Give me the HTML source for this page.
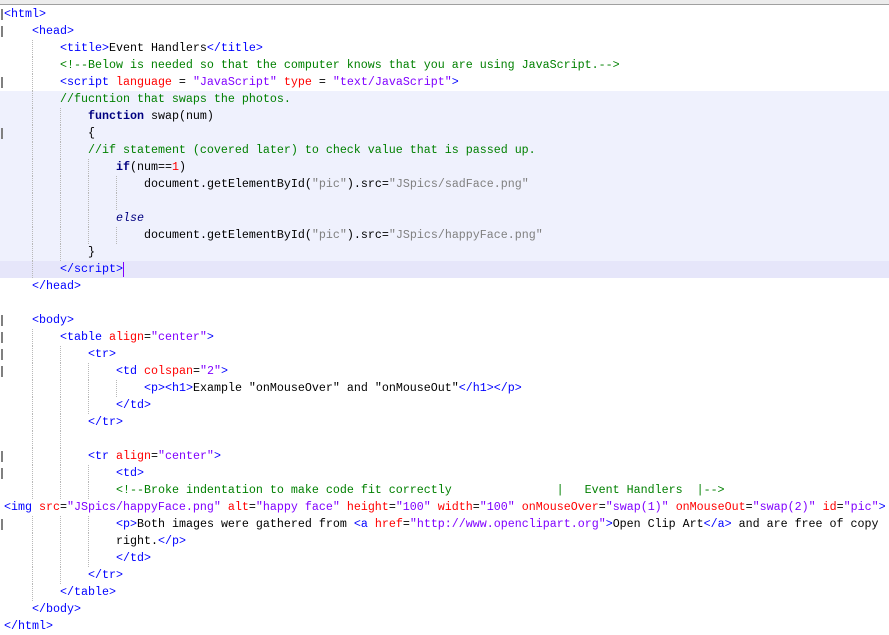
<!DOCTYPE html>
<html><head><meta charset="utf-8"><style>
html,body{margin:0;padding:0;background:#fff;width:889px;height:635px;overflow:hidden}
.top{position:absolute;left:0;top:0;width:889px;height:4px;background:#ececec;border-bottom:1px solid #a0a0a0}
.ed{position:absolute;left:0;top:6px;width:889px}
.l{height:17px;line-height:17px;white-space:pre;font-family:"Liberation Mono","Courier New",monospace;font-size:11.67px;color:#000;padding-left:4px;position:relative}
.hl{background:#eff1fd}
.cur{background:#e6e6fa}
.i{display:inline-block;width:28px;height:17px;vertical-align:top}
.g{display:inline-block;width:27px;height:17px;vertical-align:top;border-left:1px dotted #b8b8b8}
.t{color:#0000ff}.a{color:#ff0000}.s{color:#8000ff}.c{color:#008000}
.k{color:#000080;font-weight:bold}.e{color:#000080;font-style:italic}.js{color:#808080}.n{color:#ff0000}
.m{position:absolute;left:1px;top:3px;width:2px;height:11px;background:#808080}
.caret{display:inline-block;width:1px;height:15px;background:#8000ff;vertical-align:top;margin-top:1px}
</style></head><body>
<div class="top"></div>
<div class="ed">
<div class="l"><span class="m"></span><span class="t">&lt;html&gt;</span></div>
<div class="l"><span class="m"></span><span class="i"></span><span class="t">&lt;head&gt;</span></div>
<div class="l"><span class="i"></span><span class="g"></span><span class="t">&lt;title&gt;</span>Event Handlers<span class="t">&lt;/title&gt;</span></div>
<div class="l"><span class="i"></span><span class="g"></span><span class="c">&lt;!--Below is needed so that the computer knows that you are using JavaScript.--&gt;</span></div>
<div class="l"><span class="m"></span><span class="i"></span><span class="g"></span><span class="t">&lt;script </span><span class="a">language</span> = <span class="s">"JavaScript"</span> <span class="a">type</span> = <span class="s">"text/JavaScript"</span><span class="t">&gt;</span></div>
<div class="l hl"><span class="i"></span><span class="g"></span><span class="c">//fucntion that swaps the photos.</span></div>
<div class="l hl"><span class="i"></span><span class="g"></span><span class="g"></span><span class="k">function</span> swap(num)</div>
<div class="l hl"><span class="m"></span><span class="i"></span><span class="g"></span><span class="g"></span>{</div>
<div class="l hl"><span class="i"></span><span class="g"></span><span class="g"></span><span class="c">//if statement (covered later) to check value that is passed up.</span></div>
<div class="l hl"><span class="i"></span><span class="g"></span><span class="g"></span><span class="g"></span><span class="k">if</span>(num==<span class="n">1</span>)</div>
<div class="l hl"><span class="i"></span><span class="g"></span><span class="g"></span><span class="g"></span><span class="g"></span>document.getElementById(<span class="js">"pic"</span>).src=<span class="js">"JSpics/sadFace.png"</span></div>
<div class="l hl"><span class="i"></span><span class="g"></span><span class="g"></span><span class="g"></span><span class="g"></span></div>
<div class="l hl"><span class="i"></span><span class="g"></span><span class="g"></span><span class="g"></span><span class="e">else</span></div>
<div class="l hl"><span class="i"></span><span class="g"></span><span class="g"></span><span class="g"></span><span class="g"></span>document.getElementById(<span class="js">"pic"</span>).src=<span class="js">"JSpics/happyFace.png"</span></div>
<div class="l hl"><span class="i"></span><span class="g"></span><span class="g"></span>}</div>
<div class="l cur"><span class="i"></span><span class="g"></span><span class="t">&lt;/script&gt;</span><span class="caret"></span></div>
<div class="l"><span class="i"></span><span class="t">&lt;/head&gt;</span></div>
<div class="l"></div>
<div class="l"><span class="m"></span><span class="i"></span><span class="t">&lt;body&gt;</span></div>
<div class="l"><span class="m"></span><span class="i"></span><span class="g"></span><span class="t">&lt;table </span><span class="a">align</span>=<span class="s">"center"</span><span class="t">&gt;</span></div>
<div class="l"><span class="m"></span><span class="i"></span><span class="g"></span><span class="g"></span><span class="t">&lt;tr&gt;</span></div>
<div class="l"><span class="m"></span><span class="i"></span><span class="g"></span><span class="g"></span><span class="g"></span><span class="t">&lt;td </span><span class="a">colspan</span>=<span class="s">"2"</span><span class="t">&gt;</span></div>
<div class="l"><span class="i"></span><span class="g"></span><span class="g"></span><span class="g"></span><span class="g"></span><span class="t">&lt;p&gt;&lt;h1&gt;</span>Example "onMouseOver" and "onMouseOut"<span class="t">&lt;/h1&gt;&lt;/p&gt;</span></div>
<div class="l"><span class="i"></span><span class="g"></span><span class="g"></span><span class="g"></span><span class="t">&lt;/td&gt;</span></div>
<div class="l"><span class="i"></span><span class="g"></span><span class="g"></span><span class="t">&lt;/tr&gt;</span></div>
<div class="l"><span class="i"></span><span class="g"></span><span class="g"></span></div>
<div class="l"><span class="m"></span><span class="i"></span><span class="g"></span><span class="g"></span><span class="t">&lt;tr </span><span class="a">align</span>=<span class="s">"center"</span><span class="t">&gt;</span></div>
<div class="l"><span class="m"></span><span class="i"></span><span class="g"></span><span class="g"></span><span class="g"></span><span class="t">&lt;td&gt;</span></div>
<div class="l"><span class="i"></span><span class="g"></span><span class="g"></span><span class="g"></span><span class="c">&lt;!--Broke indentation to make code fit correctly               |   Event Handlers  |--&gt;</span></div>
<div class="l"><span class="t">&lt;img </span><span class="a">src</span>=<span class="s">"JSpics/happyFace.png"</span> <span class="a">alt</span>=<span class="s">"happy face"</span> <span class="a">height</span>=<span class="s">"100"</span> <span class="a">width</span>=<span class="s">"100"</span> <span class="a">onMouseOver</span>=<span class="s">"swap(1)"</span> <span class="a">onMouseOut</span>=<span class="s">"swap(2)"</span> <span class="a">id</span>=<span class="s">"pic"</span><span class="t">&gt;</span></div>
<div class="l"><span class="m"></span><span class="i"></span><span class="g"></span><span class="g"></span><span class="g"></span><span class="t">&lt;p&gt;</span>Both images were gathered from <span class="t">&lt;a </span><span class="a">href</span>=<span class="s">"http://www.openclipart.org"</span><span class="t">&gt;</span>Open Clip Art<span class="t">&lt;/a&gt;</span> and are free of copy</div>
<div class="l"><span class="i"></span><span class="g"></span><span class="g"></span><span class="g"></span>right.<span class="t">&lt;/p&gt;</span></div>
<div class="l"><span class="i"></span><span class="g"></span><span class="g"></span><span class="g"></span><span class="t">&lt;/td&gt;</span></div>
<div class="l"><span class="i"></span><span class="g"></span><span class="g"></span><span class="t">&lt;/tr&gt;</span></div>
<div class="l"><span class="i"></span><span class="g"></span><span class="t">&lt;/table&gt;</span></div>
<div class="l"><span class="i"></span><span class="t">&lt;/body&gt;</span></div>
<div class="l"><span class="t">&lt;/html&gt;</span></div>
</div>
</body></html>
